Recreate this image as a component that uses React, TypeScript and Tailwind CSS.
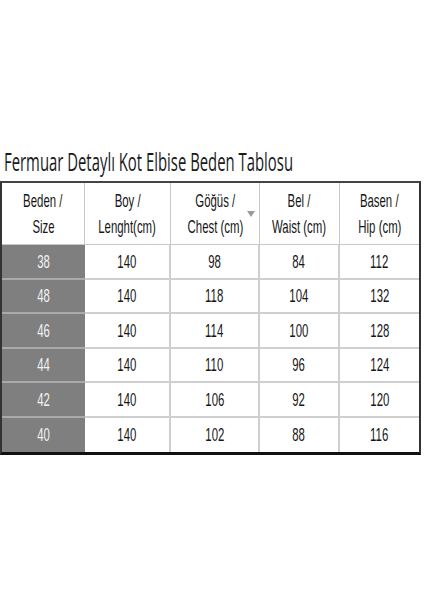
import React from "react";

const headers: [string, string][] = [
  ["Beden /", "Size"],
  ["Boy /", "Lenght(cm)"],
  ["Göğüs /", "Chest (cm)"],
  ["Bel /", "Waist (cm)"],
  ["Basen /", "Hip (cm)"],
];

const rows: string[][] = [
  ["38", "140", "98", "84", "112"],
  ["48", "140", "118", "104", "132"],
  ["46", "140", "114", "100", "128"],
  ["44", "140", "110", "96", "124"],
  ["42", "140", "106", "92", "120"],
  ["40", "140", "102", "88", "116"],
];

const Narrow: React.FC<{ children: React.ReactNode }> = ({ children }) => (
  <span className="inline-block origin-center scale-x-[0.6] whitespace-nowrap">
    {children}
  </span>
);

const App: React.FC = () => {
  return (
    <div className="h-[600px] w-[424px] overflow-hidden bg-white font-['Liberation_Sans',Arial,sans-serif] text-[#161616]">
      <div className="h-[144px]" />
      <div className="h-[37px] pl-[4px]">
        <span className="inline-block origin-left scale-x-[0.595] whitespace-nowrap font-['Open_Sans',sans-serif] text-[25px] leading-[34px] text-[#1a1a1a]">
          Fermuar Detaylı Kot Elbise Beden Tablosu
        </span>
      </div>
      <div className="w-[421px] border-x-2 border-t-2 border-b-[3px] border-x-[#333] border-t-[#444] border-b-[#111]">
        <div className="grid grid-cols-[83px_86px_89px_80px_79px] text-[19px]">
          {headers.map(([a, b], i) => (
            <div
              key={i}
              className={`relative flex h-[62px] flex-col items-center justify-center border-b border-[#c8c8c8] leading-[26px] ${
                i < 4 ? "border-r" : ""
              }`}
            >
              <Narrow>{a}</Narrow>
              <Narrow>{b}</Narrow>
              {i === 2 && (
                <svg
                  className="absolute right-[4px] top-[28px]"
                  width="8"
                  height="6"
                  viewBox="0 0 8 6"
                >
                  <path d="M0 0 L8 0 L4 6 Z" fill="#9a9a9a" />
                </svg>
              )}
            </div>
          ))}
          {rows.map((r, ri) =>
            r.map((v, ci) => (
              <div
                key={`${ri}-${ci}`}
                className={`flex h-[34.5px] items-center justify-center leading-none ${
                  ci === 0
                    ? "bg-[#7f7f7f] text-[#f2f2f2]"
                    : "bg-white"
                } ${
                  ri < rows.length - 1
                    ? ci === 0
                      ? "border-b-2 border-[#a9a9a9]"
                      : "border-b-2 border-[#cfcfcf]"
                    : ""
                } ${ci > 0 && ci < 4 ? "border-r-2 border-r-[#cfcfcf]" : ""}`}
              >
                <Narrow>{v}</Narrow>
              </div>
            ))
          )}
        </div>
      </div>
    </div>
  );
};

export default App;
